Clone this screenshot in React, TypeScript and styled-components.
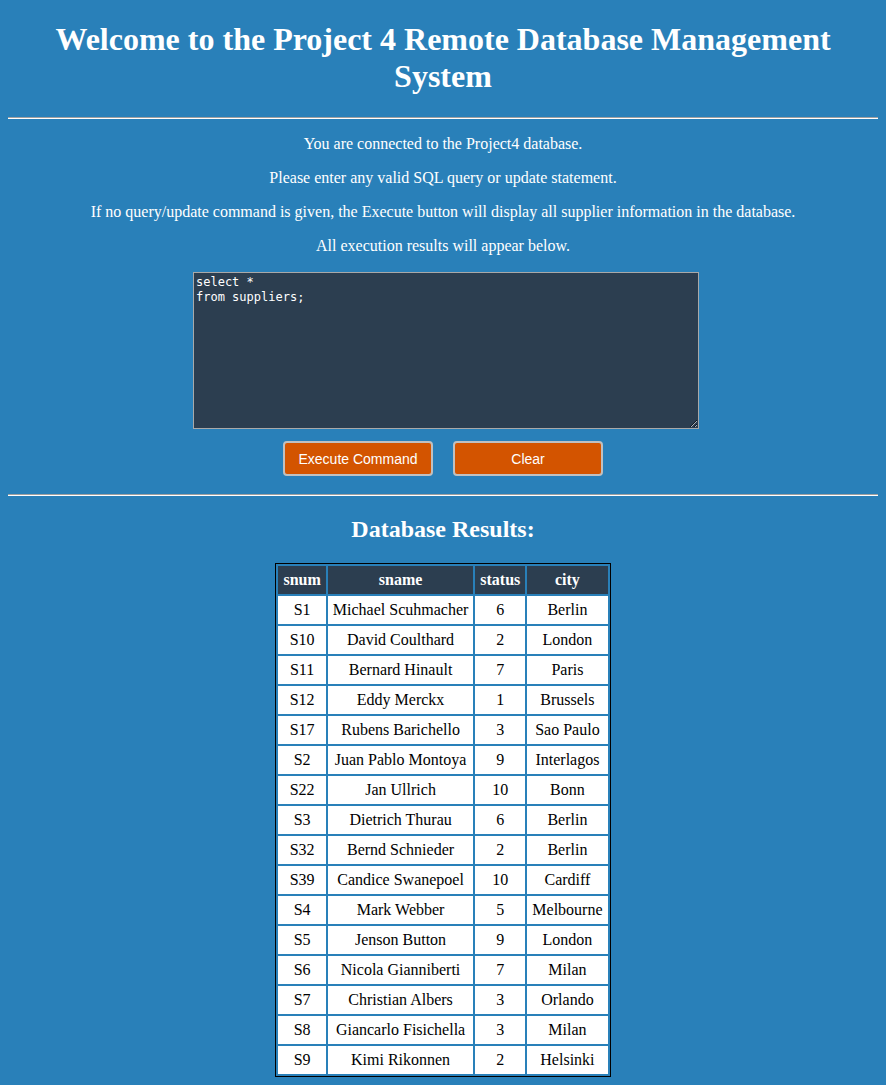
import React from "react";
import styled, { createGlobalStyle } from "styled-components";

const Global = createGlobalStyle`
  html, body { background: #2980b9; }
  body {
    margin: 8px;
    font-family: "Liberation Serif", "Times New Roman", serif;
    color: #ffffff;
  }
`;

const Page = styled.div`
  display: flex;
  flex-direction: column;
  align-items: center;
  text-align: center;
`;

const Title = styled.h1`
  font-size: 32px;
  font-weight: bold;
  margin: 13px 0 22px;
  line-height: 37px;
  max-width: 800px;
`;

const Rule = styled.hr`
  align-self: stretch;
  margin: 0;
  border: none;
  border-top: 1px solid #a0a0a0;
  border-bottom: 1px solid #ffffff;
  height: 0;
`;

const Intro = styled.div`
  margin-top: 16px;
  display: flex;
  flex-direction: column;
  gap: 16px;
  font-size: 16px;
  line-height: 18px;
`;

const Para = styled.p`
  margin: 0;
`;

const Editor = styled.textarea`
  margin: 17px 0 0 6px;
  width: 506px;
  height: 157px;
  box-sizing: border-box;
  background: #2c3e50;
  color: #ffffff;
  border: 1px solid #a9a9a9;
  padding: 2px 2px;
  font-family: "DejaVu Sans Mono", monospace;
  font-size: 12px;
  line-height: 15px;
  resize: both;
`;

const Buttons = styled.div`
  display: flex;
  gap: 20px;
  margin: 12px 0 18px;
`;

const Button = styled.button`
  width: 150px;
  height: 35px;
  background: #d35400;
  color: #ffffff;
  border: 2px solid #c0c0c0;
  border-radius: 4px;
  font-family: "Liberation Sans", Arial, sans-serif;
  font-size: 14px;
  cursor: pointer;
`;

const Heading = styled.h2`
  font-size: 24px;
  font-weight: bold;
  margin: 19px 0 20px;
  line-height: 28px;
`;

const Table = styled.table`
  border: 1px solid #000000;
  border-spacing: 2px;
  color: #000000;
  font-size: 16px;
`;

const HeadCell = styled.th`
  background: #2c3e50;
  color: #ffffff;
  font-weight: bold;
  padding: 5px 5px;
  height: 18px;
`;

const Cell = styled.td`
  background: #ffffff;
  padding: 5px 5px;
  height: 18px;
`;

const rows: [string, string, string, string][] = [
  ["S1", "Michael Scuhmacher", "6", "Berlin"],
  ["S10", "David Coulthard", "2", "London"],
  ["S11", "Bernard Hinault", "7", "Paris"],
  ["S12", "Eddy Merckx", "1", "Brussels"],
  ["S17", "Rubens Barichello", "3", "Sao Paulo"],
  ["S2", "Juan Pablo Montoya", "9", "Interlagos"],
  ["S22", "Jan Ullrich", "10", "Bonn"],
  ["S3", "Dietrich Thurau", "6", "Berlin"],
  ["S32", "Bernd Schnieder", "2", "Berlin"],
  ["S39", "Candice Swanepoel", "10", "Cardiff"],
  ["S4", "Mark Webber", "5", "Melbourne"],
  ["S5", "Jenson Button", "9", "London"],
  ["S6", "Nicola Gianniberti", "7", "Milan"],
  ["S7", "Christian Albers", "3", "Orlando"],
  ["S8", "Giancarlo Fisichella", "3", "Milan"],
  ["S9", "Kimi Rikonnen", "2", "Helsinki"],
];

export default function App() {
  return (
    <>
      <Global />
      <Page>
        <Title>Welcome to the Project 4 Remote Database Management System</Title>
        <Rule />
        <Intro>
          <Para>You are connected to the Project4 database.</Para>
          <Para>Please enter any valid SQL query or update statement.</Para>
          <Para>
            If no query/update command is given, the Execute button will display all supplier information in the database.
          </Para>
          <Para>All execution results will appear below.</Para>
        </Intro>
        <Editor defaultValue={"select *\nfrom suppliers;"} spellCheck={false} />
        <Buttons>
          <Button>Execute Command</Button>
          <Button>Clear</Button>
        </Buttons>
        <Rule />
        <Heading>Database Results:</Heading>
        <Table>
          <thead>
            <tr>
              <HeadCell>snum</HeadCell>
              <HeadCell>sname</HeadCell>
              <HeadCell>status</HeadCell>
              <HeadCell>city</HeadCell>
            </tr>
          </thead>
          <tbody>
            {rows.map((r) => (
              <tr key={r[0]}>
                {r.map((c, i) => (
                  <Cell key={i}>{c}</Cell>
                ))}
              </tr>
            ))}
          </tbody>
        </Table>
      </Page>
    </>
  );
}
